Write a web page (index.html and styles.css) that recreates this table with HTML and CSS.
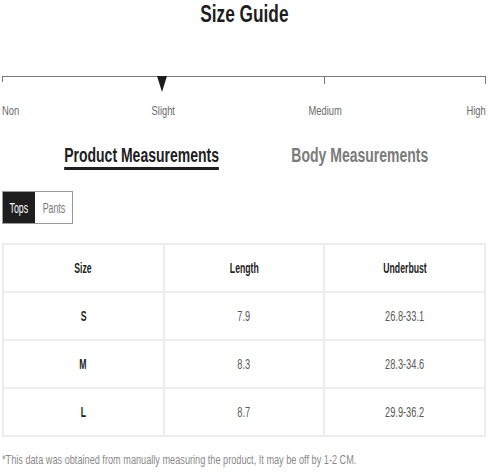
FILE: index.html
```html
<!DOCTYPE html>
<html lang="en">
<head>
<meta charset="utf-8">
<title>Size Guide</title>
<link rel="stylesheet" href="styles.css">
</head>
<body>
<main class="guide">
  <h1 class="title"><span class="cond">Size Guide</span></h1>

  <section class="stretch">
    <div class="track">
      <div class="seg seg-a"></div>
      <div class="seg seg-b"></div>
      <span class="pointer" style="left: 33.333%"></span>
    </div>
    <div class="labels">
      <span class="lbl lbl-non">Non</span>
      <span class="lbl lbl-slight">Slight</span>
      <span class="lbl lbl-medium">Medium</span>
      <span class="lbl lbl-high">High</span>
    </div>
  </section>

  <nav class="tabs">
    <span class="tab tab-active">Product Measurements</span>
    <span class="tab">Body Measurements</span>
  </nav>

  <div class="switch">
    <span class="sw sw-on"><span class="cond">Tops</span></span>
    <span class="sw sw-off"><span class="cond">Pants</span></span>
  </div>

  <table class="sizes">
    <thead>
      <tr><th><span class="cond">Size</span></th><th><span class="cond">Length</span></th><th><span class="cond">Underbust</span></th></tr>
    </thead>
    <tbody>
      <tr><th><span class="cond">S</span></th><td><span class="cond">7.9</span></td><td><span class="cond">26.8-33.1</span></td></tr>
      <tr><th><span class="cond">M</span></th><td><span class="cond">8.3</span></td><td><span class="cond">28.3-34.6</span></td></tr>
      <tr><th><span class="cond">L</span></th><td><span class="cond">8.7</span></td><td><span class="cond">29.9-36.2</span></td></tr>
    </tbody>
  </table>

  <p class="note"><span class="cond cond-left">*This data was obtained from manually measuring the product, It may be off by 1-2 CM.</span></p>
</main>
</body>
</html>
```

FILE: styles.css
```css
* { box-sizing: border-box; }

html, body {
  margin: 0;
  padding: 0;
  background: #fff;
}

body {
  font-family: "Liberation Sans", Arial, sans-serif;
  color: #222;
}

/* condensed look of the original face */
.cond {
  display: inline-block;
  white-space: nowrap;
  transform: scaleX(0.7);
  transform-origin: center;
}

.cond-left { transform-origin: left center; }

.guide {
  width: 488px;
  padding: 0 2px;
}

.title {
  margin: 0;
  font-size: 24px;
  line-height: 28px;
  font-weight: 700;
  text-align: center;
  color: #1e1e1e;
}

.title .cond { transform: scaleX(0.72); }

.stretch {
  margin-top: 48px;
}

.track {
  position: relative;
  display: flex;
  height: 7px;
}

.seg {
  border-top: 1px solid #7a7a7a;
  border-left: 1px solid #7a7a7a;
  height: 8px;
}

.seg-a { flex: 2; height: 6px; }
.seg-b { flex: 1; border-right: 1px solid #7a7a7a; }

.pointer {
  position: absolute;
  top: 0;
  width: 0;
  height: 0;
  margin-left: -6.5px;
  border-left: 5.5px solid transparent;
  border-right: 5.5px solid transparent;
  border-top: 16px solid #1c1c1c;
}

.labels {
  display: grid;
  grid-template-columns: repeat(6, 1fr);
  margin-top: 20px;
  font-size: 13px;
  line-height: 16px;
  color: #6a6a6a;
}

.lbl {
  white-space: nowrap;
  transform: scaleX(0.72);
}

.lbl-non { grid-column: 1; justify-self: start; transform-origin: left center; }
.lbl-slight { grid-column: 2 / 4; justify-self: center; }
.lbl-medium { grid-column: 4 / 6; justify-self: center; }
.lbl-high { grid-column: 6; justify-self: end; transform-origin: right center; }

.tabs {
  display: flex;
  justify-content: center;
  gap: 10px;
  margin-top: 24px;
}

.tab {
  display: inline-block;
  white-space: nowrap;
  font-size: 20px;
  line-height: 24px;
  font-weight: 700;
  color: #7b7b7b;
  border-bottom: 3px solid transparent;
  transform: scaleX(0.7);
}

.tab-active {
  color: #1e1e1e;
  border-bottom-color: #1e1e1e;
}

.switch {
  display: inline-flex;
  margin-top: 21px;
  border: 1px solid #9a9a9a;
  height: 33px;
}

.sw {
  display: flex;
  align-items: center;
  justify-content: center;
  font-size: 14px;
  color: #777;
  background: #fff;
}

.sw .cond { transform: scaleX(0.63); }

.sw-on {
  width: 32px;
  background: #1e1e1e;
  color: #fff;
}

.sw-off { width: 37px; }

.sizes {
  width: 100%;
  margin-top: 19px;
  border-collapse: collapse;
  table-layout: fixed;
  border: 2px solid #ededed;
}

.sizes th,
.sizes td {
  height: 48px;
  border: 2px solid #ededed;
  text-align: center;
  font-size: 14px;
  padding: 0;
}

.sizes .cond { transform: scaleX(0.66); }

.sizes th { font-weight: 700; color: #222; }
.sizes th .cond { transform: scaleX(0.62); }
.sizes td { color: #5a5a5a; }

.note {
  margin: 15px 0 0;
  font-size: 13px;
  line-height: 16px;
  color: #8a8a8a;
}

.note .cond { transform: scaleX(0.705); }
```
